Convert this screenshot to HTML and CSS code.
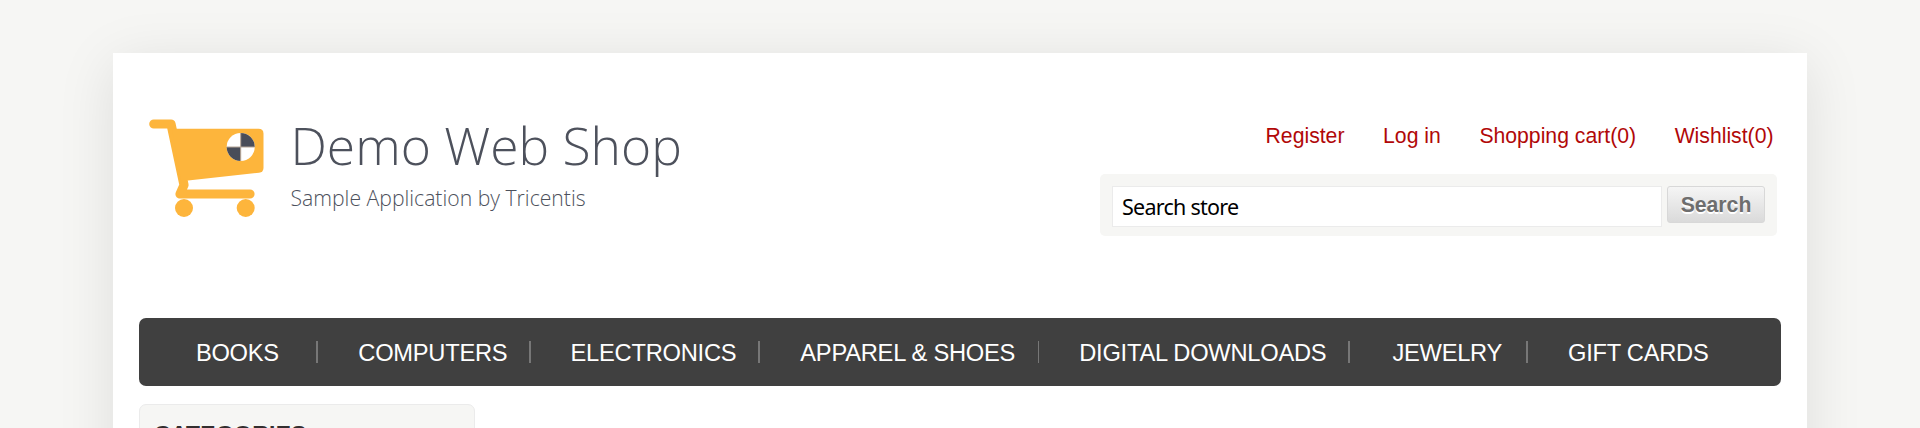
FILE: index.html
```
<!DOCTYPE html>
<html lang="en">
<head>
<meta charset="utf-8">
<title>Demo Web Shop</title>
<link rel="stylesheet" href="styles.css">
</head>
<body>
<div class="page">
  <header class="header">
    <a class="logo">
      <svg class="cart" width="120" height="104" viewBox="0 0 120 104">
        <path d="M9.800 9H27L40 70L36 79H106" fill="none" stroke="#fdb53c" stroke-width="9.200" stroke-linecap="round" stroke-linejoin="round"/>
        <path d="M28 13.700H114.500Q119.500 13.700 119.500 18.700V53Q119.500 57 115 57.700L44 65.500H37Z" fill="#fdb53c"/>
        <circle cx="40" cy="93" r="9" fill="#fdb53c"/>
        <circle cx="101.700" cy="93" r="9" fill="#fdb53c"/>
        <circle cx="96.700" cy="32" r="14" fill="#fff"/>
        <path d="M96.700 32V18A14 14 0 0 1 110.700 32ZM96.700 32V46A14 14 0 0 1 82.700 32Z" fill="#494d59"/>
        <path d="M96.700 18V46M82.700 32H110.700" stroke="#b5a596" stroke-width="1"/>
      </svg>
      <span class="brand">
        <span class="name">Demo Web Shop</span>
        <span class="tagline">Sample Application by Tricentis</span>
      </span>
    </a>
    <div class="tools">
      <nav class="links"><a>Register</a><a>Log in</a><a>Shopping cart(0)</a><a>Wishlist(0)</a></nav>
      <form class="search">
        <input class="field" type="text" value="Search store">
        <button class="button" type="button">Search</button>
      </form>
    </div>
  </header>
  <nav class="menu">
    <a class="item books">BOOKS</a>
    <a class="item">COMPUTERS</a>
    <a class="item">ELECTRONICS</a>
    <a class="item apparel">APPAREL &amp; SHOES</a>
    <a class="item digital">DIGITAL DOWNLOADS</a>
    <a class="item jewelry">JEWELRY</a>
    <a class="item">GIFT CARDS</a>
  </nav>
  <aside class="block"><strong class="title">CATEGORIES</strong></aside>
</div>
</body>
</html>
```
FILE: styles.css
```
* { box-sizing: border-box; }
html, body { height: 428px; overflow: hidden; }
body {
  margin: 0;
  padding-top: 53px;
  background: #f6f6f4;
  font-family: "Liberation Sans", Arial, sans-serif;
}
.page {
  width: 1694px;
  height: 700px;
  margin: 0 auto;
  padding: 57px 26px 0;
  background: #fff;
  box-shadow: 0 10px 54px rgba(0, 0, 0, .1);
}
.header {
  display: flex;
  justify-content: space-between;
  height: 208px;
}
.logo { display: flex; padding: 5px 0 0 5px; }
.cart { display: block; }
.brand {
  display: flex;
  flex-direction: column;
  padding-left: 26.500px;
  font-family: "Open Sans", sans-serif;
  font-weight: 300;
  white-space: nowrap;
}
.name { font-size: 51.5px; line-height: 61px; color: #4d515c; }
.tagline { margin-top: 7px; font-size: 21.2px; line-height: 30px; color: #4d515c; }
.tools { width: 677px; margin-right: 4px; }
.links {
  display: flex;
  justify-content: flex-end;
  gap: 38.600px;
  height: 64px;
  padding: 14px 3.500px 0 0;
  font-size: 21.2px;
  line-height: 24px;
  color: #b10808;
}
.search {
  display: flex;
  align-items: flex-start;
  gap: 5px;
  height: 62px;
  padding: 12px;
  border-radius: 5px;
  background: #f6f6f4;
}
.field {
  width: 550px;
  height: 41px;
  padding: 0 9px;
  border: 1px solid #ebebeb;
  background: #fff;
  font: 21.5px "Noto Sans", sans-serif;
  letter-spacing: -.75px;
  color: #000;
}
.button {
  width: 98px;
  height: 37px;
  padding: 0;
  border: 1px solid #d8d8d8;
  border-radius: 3px;
  background: linear-gradient(#f5f5f5, #dadada);
  font: bold 21.2px "Liberation Sans", Arial, sans-serif;
  color: #6e6e6e;
  text-shadow: 0 2px 0 #fff;
}
.menu {
  display: flex;
  align-items: center;
  height: 68px;
  padding-left: 17px;
  border-radius: 7px;
  background: #404040;
  color: #fff;
  font-size: 23.7px;
  letter-spacing: -.25px;
}
.item {
  height: 22px;
  padding: 0 21.300px 0 39.900px;
  border-right: 2px solid #777;
  line-height: 24px;
  white-space: nowrap;
}
.books { padding-right: 37.500px; }
.apparel { padding-left: 40.700px; padding-right: 22.500px; border-right-width: 1px; }
.digital { padding-left: 40.700px; }
.jewelry { padding-left: 42.700px; padding-right: 24px; }
.item:last-child { border-right: 0; }
.block {
  width: 336px;
  height: 80px;
  margin-top: 18px;
  padding: 15px 14px;
  border: 1px solid #ebebeb;
  border-radius: 7px;
  background: #f6f6f4;
}
.title { display: block; font-size: 22.87px; line-height: 26px; letter-spacing: .35px; color: #332e2e; }
```
